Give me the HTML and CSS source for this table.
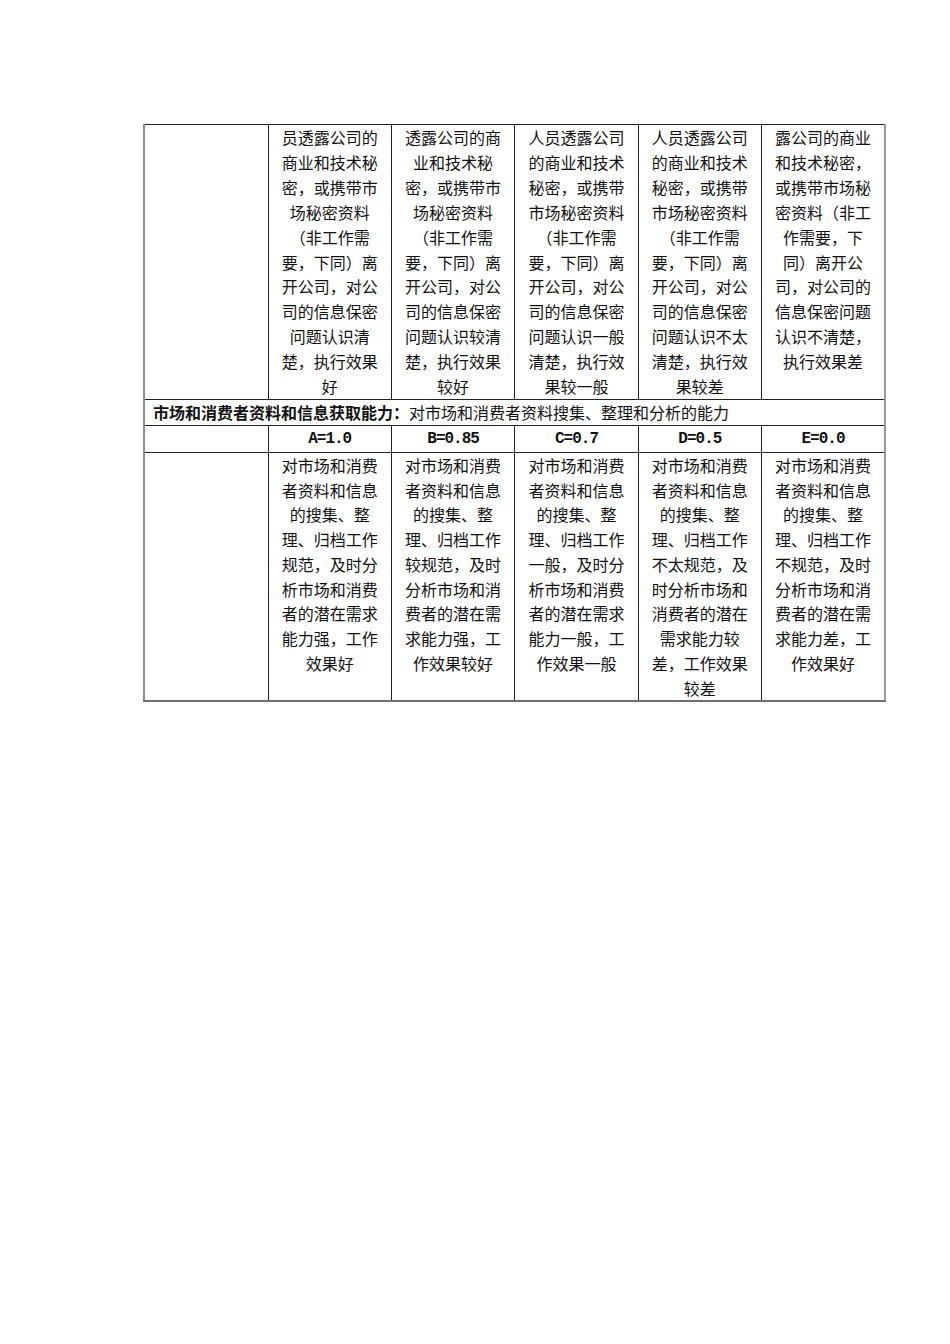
FILE: index.html
```html
<!DOCTYPE html>
<html lang="zh-CN">
<head>
<meta charset="utf-8">
<title>能力评价表</title>
<link rel="stylesheet" href="styles.css">
</head>
<body>
<div class="page">
  <table class="grid">
    <colgroup>
      <col class="c0"><col class="c1"><col class="c1"><col class="c1"><col class="c1"><col class="c1">
    </colgroup>
    <tr class="tall">
      <td></td>
      <td>员透露公司的<br>商业和技术秘<br>密，或携带市<br>场秘密资料<br>（非工作需<br>要，下同）离<br>开公司，对公<br>司的信息保密<br>问题认识清<br>楚，执行效果<br>好</td>
      <td>透露公司的商<br>业和技术秘<br>密，或携带市<br>场秘密资料<br>（非工作需<br>要，下同）离<br>开公司，对公<br>司的信息保密<br>问题认识较清<br>楚，执行效果<br>较好</td>
      <td>人员透露公司<br>的商业和技术<br>秘密，或携带<br>市场秘密资料<br>（非工作需<br>要，下同）离<br>开公司，对公<br>司的信息保密<br>问题认识一般<br>清楚，执行效<br>果较一般</td>
      <td>人员透露公司<br>的商业和技术<br>秘密，或携带<br>市场秘密资料<br>（非工作需<br>要，下同）离<br>开公司，对公<br>司的信息保密<br>问题认识不太<br>清楚，执行效<br>果较差</td>
      <td>露公司的商业<br>和技术秘密，<br>或携带市场秘<br>密资料（非工<br>作需要，下<br>同）离开公<br>司，对公司的<br>信息保密问题<br>认识不清楚，<br>执行效果差</td>
    </tr>
    <tr class="single">
      <td colspan="6" class="title"><b>市场和消费者资料和信息获取能力：</b>对市场和消费者资料搜集、整理和分析的能力</td>
    </tr>
    <tr class="single">
      <td></td>
      <td class="grade">A=1.0</td>
      <td class="grade">B=0.85</td>
      <td class="grade">C=0.7</td>
      <td class="grade">D=0.5</td>
      <td class="grade">E=0.0</td>
    </tr>
    <tr class="tall last">
      <td></td>
      <td>对市场和消费<br>者资料和信息<br>的搜集、整<br>理、归档工作<br>规范，及时分<br>析市场和消费<br>者的潜在需求<br>能力强，工作<br>效果好</td>
      <td>对市场和消费<br>者资料和信息<br>的搜集、整<br>理、归档工作<br>较规范，及时<br>分析市场和消<br>费者的潜在需<br>求能力强，工<br>作效果较好</td>
      <td>对市场和消费<br>者资料和信息<br>的搜集、整<br>理、归档工作<br>一般，及时分<br>析市场和消费<br>者的潜在需求<br>能力一般，工<br>作效果一般</td>
      <td>对市场和消费<br>者资料和信息<br>的搜集、整<br>理、归档工作<br>不太规范，及<br>时分析市场和<br>消费者的潜在<br>需求能力较<br>差，工作效果<br>较差</td>
      <td>对市场和消费<br>者资料和信息<br>的搜集、整<br>理、归档工作<br>不规范，及时<br>分析市场和消<br>费者的潜在需<br>求能力差，工<br>作效果好</td>
    </tr>
  </table>
</div>
</body>
</html>
```

FILE: styles.css
```css
html, body {
  margin: 0;
  padding: 0;
  background: #ffffff;
}

.page {
  width: 950px;
  height: 1344px;
  box-sizing: border-box;
  padding: 124px 0 0 143px;
}

.grid {
  border-collapse: collapse;
  table-layout: fixed;
  width: 741px;
  font-family: "Liberation Serif", "Noto Sans CJK SC", serif;
  font-size: 16px;
  line-height: 24.9px;
  color: #111;
  border-top: 1px solid #111;
  border-left: 2px solid #8c8c8c;
  border-right: 2px solid #9a9a9a;
  border-bottom: 2px solid #6e6e6e;
}

.c0 { width: 124px; }
.c1 { width: 123.4px; }

.grid td {
  border: 1px solid #222;
  padding: 0 6px;
  text-align: center;
  vertical-align: top;
  font-family: "Noto Sans CJK SC", sans-serif;
  font-weight: 400;
}

.grid td:first-child { border-left: 2px solid #8c8c8c; }
.grid td:last-child { border-right: 2px solid #9a9a9a; }
.grid tr.last td {
  border-bottom: 2px solid #6e6e6e;
  line-height: 24.75px;
}

.grid .single td {
  height: 25px;
  line-height: 25px;
}

.grid td.title {
  text-align: left;
  padding-left: 8px;
}

.grid td.title b {
  font-weight: 700;
}

.grid .single td.grade {
  font-family: "Liberation Mono", "DejaVu Sans Mono", monospace;
  font-size: 16px;
  line-height: 26px;
  font-weight: 700;
  letter-spacing: -1px;
}
```
